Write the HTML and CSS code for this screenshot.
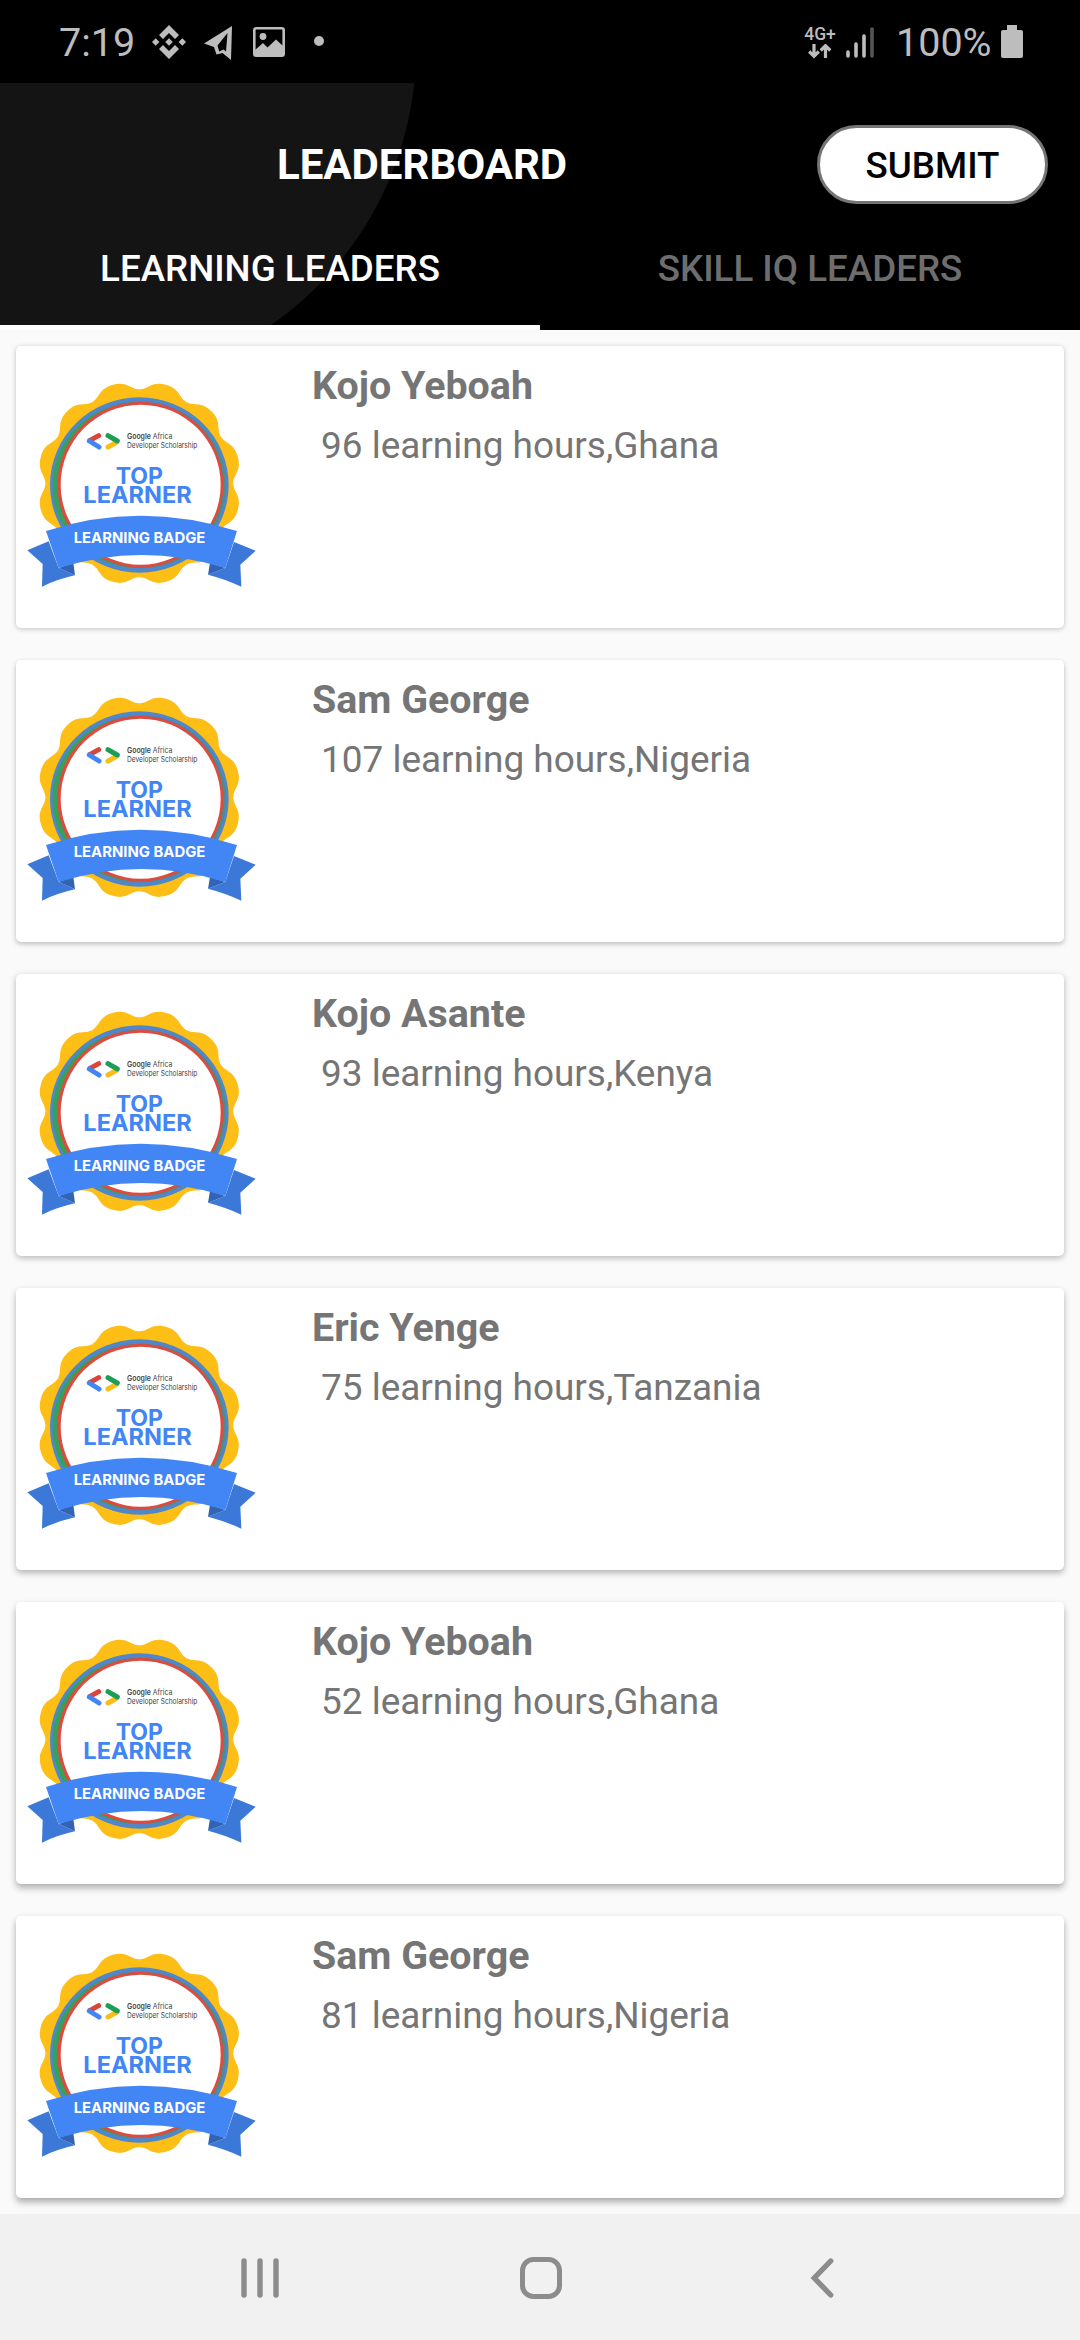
FILE: index.html
```html
<!DOCTYPE html>
<html lang="en"><head><meta charset="utf-8"><title>Leaderboard</title><link rel="stylesheet" href="styles.css"></head>
<body>
<svg class="defs" width="0" height="0" aria-hidden="true">
<defs><path id="lobe" d="M0 2L0-282C28-282 35.7-307.2 79.2-295.6C122.7-284 116.8-258.2 141-244.2Z"/></defs>
<symbol id="badge" viewBox="48 126 696 618">
<g fill="#fdbe15" transform="translate(388 430)">
<circle r="276"/>
<use href="#lobe"/><use href="#lobe" transform="rotate(30)"/><use href="#lobe" transform="rotate(60)"/><use href="#lobe" transform="rotate(90)"/><use href="#lobe" transform="rotate(120)"/><use href="#lobe" transform="rotate(150)"/><use href="#lobe" transform="rotate(180)"/><use href="#lobe" transform="rotate(210)"/><use href="#lobe" transform="rotate(240)"/><use href="#lobe" transform="rotate(270)"/><use href="#lobe" transform="rotate(300)"/><use href="#lobe" transform="rotate(330)"/>
</g>
<ellipse cx="388" cy="435" rx="268" ry="263" fill="#5086cc"/>
<ellipse cx="393" cy="435" rx="255" ry="250" fill="#4b8d8c"/>
<ellipse cx="382" cy="435" rx="254" ry="248" fill="#36a15a"/>
<circle cx="391" cy="434" r="249" fill="#dd4b3e"/>
<circle cx="392" cy="434" r="240" fill="#fff"/>
<g fill="none" stroke-width="15" stroke-linecap="round">
<path stroke="#dc4437" d="M266 287L240 301"/><path stroke="#4285f4" d="M238 303L267 321"/>
<path stroke="#fbbc15" d="M294 321L318 308"/><path stroke="#1e9d57" d="M294 287L322 303"/>
</g>
<g class="badge-small"><text x="351" y="297" textLength="136" lengthAdjust="spacingAndGlyphs"><tspan class="b">Google</tspan> Africa</text>
<text x="351" y="323" textLength="211" lengthAdjust="spacingAndGlyphs">Developer Scholarship</text></g>
<g class="badge-title"><text x="317" y="431" textLength="142" lengthAdjust="spacingAndGlyphs">TOP</text>
<text x="220" y="490" textLength="325" lengthAdjust="spacingAndGlyphs">LEARNER</text></g>
<path fill="#3c78d8" d="M52 631L116 604L146 684L195 706Q140 718 96 740L98 672ZM737 632L672 606L646 684L594 704Q648 718 694 740L691 674Z"/>
<path fill="#3263b4" d="M146 684L190 668L195 706ZM646 684L600 668L594 704Z"/>
<path fill="#4285f4" d="M108 573Q390 481 681 573L646 684Q395 606 146 684Z"/>
<text class="badge-ribbon" x="191" y="608" textLength="395" lengthAdjust="spacingAndGlyphs">LEARNING BADGE</text>
</symbol>
</svg>
<div class="screen">
<header class="status">
<span class="clock">7:19</span>
<svg class="i-diamond" width="34" height="34" viewBox="0 0 34 34" fill="#bdbdbd"><path d="M17 0L27 10L23 14L17 8L11 14L7 10ZM17 34L27 24L23 20L17 26L11 20L7 24ZM3.7 13.3L7.4 17L3.7 20.7L0 17ZM30.3 13.3L34 17L30.3 20.7L26.6 17ZM17 13.2L20.8 17L17 20.8L13.2 17Z"/></svg>
<svg class="i-plane" width="28" height="34" viewBox="0 0 28 34"><path fill="#bdbdbd" fill-rule="evenodd" d="M28 0L27 34L18.500 27L12.500 28.500L10 21L0 17.500ZM23.500 7L13.500 19.500L15.200 25.500L19.500 23.500L22 25.500Z"/></svg>
<svg class="i-photo" width="32" height="30" viewBox="0 0 32 30"><rect x="1.300" y="1.300" width="29.400" height="27.400" rx="2" fill="none" stroke="#bdbdbd" stroke-width="2.600"/><circle cx="10" cy="9.500" r="3.400" fill="#bdbdbd"/><path fill="#bdbdbd" d="M2 23L10 16L14.500 20.500L23 12.500L30 19V28H2Z"/></svg>
<i class="dot"></i>
<span class="net"><b>4G+</b><svg width="24" height="15" viewBox="0 0 24 15" fill="none" stroke="#bdbdbd" stroke-width="3.200"><path d="M6 0V12M1.200 7.500L6 12.300L10.800 7.500M17.500 14V2M12.700 6.500L17.500 1.700L22.300 6.500"/></svg></span>
<svg class="i-signal" width="28" height="31" viewBox="0 0 28 31" stroke-width="3.600" stroke-linecap="round" stroke="#bdbdbd"><path d="M2 25V29M10 17V29M18 9V29"/><path stroke="#555" d="M26 2V29"/></svg>
<span class="pct">100%</span>
<svg class="i-bat" width="22" height="33" viewBox="0 0 22 33" fill="#bdbdbd"><path d="M6 0H16V5H20Q22 5 22 7V31Q22 33 20 33H2Q0 33 0 31V7Q0 5 2 5H6Z"/></svg>
</header>
<section class="appbar">
<div class="bar"><h1>LEADERBOARD</h1><button class="submit">SUBMIT</button></div>
<nav class="tabs"><a class="tab active">LEARNING LEADERS</a><a class="tab">SKILL IQ LEADERS</a></nav>
</section>
<main class="list">
<article class="card s1"><svg class="badge"><use href="#badge"/></svg><div class="info"><h2>Kojo Yeboah</h2><p>96 learning hours,Ghana</p></div></article>
<article class="card s2"><svg class="badge"><use href="#badge"/></svg><div class="info"><h2>Sam George</h2><p>107 learning hours,Nigeria</p></div></article>
<article class="card s3"><svg class="badge"><use href="#badge"/></svg><div class="info"><h2>Kojo Asante</h2><p>93 learning hours,Kenya</p></div></article>
<article class="card s4"><svg class="badge"><use href="#badge"/></svg><div class="info"><h2>Eric Yenge</h2><p>75 learning hours,Tanzania</p></div></article>
<article class="card s5"><svg class="badge"><use href="#badge"/></svg><div class="info"><h2>Kojo Yeboah</h2><p>52 learning hours,Ghana</p></div></article>
<article class="card s6"><svg class="badge"><use href="#badge"/></svg><div class="info"><h2>Sam George</h2><p>81 learning hours,Nigeria</p></div></article>
</main>
<footer class="navbar">
<svg class="n-recent" width="38" height="42" viewBox="0 0 38 42" stroke="#8c8c8c" stroke-width="5.400" stroke-linecap="round"><path d="M3 3V37M19 3V37M35 3V37"/></svg>
<svg class="n-home" width="42" height="42" viewBox="0 0 42 42" fill="none" stroke="#8c8c8c" stroke-width="5"><rect x="2.500" y="2.500" width="37" height="37" rx="11"/></svg>
<svg class="n-back" width="24" height="42" viewBox="0 0 24 42" fill="none" stroke="#8c8c8c" stroke-width="5.400" stroke-linecap="round"><path d="M20.700 3L4.300 20L20.700 37"/></svg>
</footer>
</div>
</body></html>
```
FILE: styles.css
```css
* { box-sizing: border-box; }
body { margin: 0; background: #fafafa; font-family: Roboto, "Liberation Sans", sans-serif; }
h1, h2, p { margin: 0; }
.defs { position: absolute; }
.screen { width: 1080px; height: 2340px; display: flex; flex-direction: column; overflow: hidden; }
.status { height: 83px; background: #000; color: #bdbdbd; display: flex; align-items: flex-start; flex: none; padding-left: 59px; }
.status > * { flex: none; }
.clock { width: 93px; margin-top: 20px; font-size: 39.500px; line-height: 46px; }
.i-diamond { margin-top: 25px; }
.i-plane { margin: 26px 0 0 18px; }
.i-photo { margin: 27px 0 0 21px; }
.dot { width: 10px; height: 10px; border-radius: 50%; background: #bdbdbd; margin: 36px 0 0 29px; }
.net { width: 32px; margin: 27px 0 0 480px; display: flex; flex-direction: column; align-items: center; }
.net b { font-size: 17.500px; line-height: 15px; font-weight: 500; }
.net svg { margin-top: 2px; }
.i-signal { margin: 27px 0 0 10px; }
.pct { width: 105px; margin: 20px 0 0 22px; font-size: 39.500px; line-height: 46px; }
.i-bat { margin-top: 25px; }
.appbar { height: 247px; flex: none; display: flex; flex-direction: column; background: radial-gradient(circle 340px at 79px -35px, #141414 336.500px, #000 337.500px); }
.bar { height: 122px; padding: 42px 32px 0 277px; display: flex; justify-content: space-between; align-items: flex-start; }
h1 { color: #fff; font-size: 42px; line-height: 50px; font-weight: 700; margin-top: 15px; }
.submit { width: 231px; height: 79px; border: 3px solid #757575; border-radius: 40px; background: #fff; color: #000; font: 500 36.750px/44px Roboto, sans-serif; padding: 2px 0 0; }
.tabs { height: 125px; display: flex; }
.tab { flex: 1; color: #6d6d6d; text-align: center; font-size: 36.750px; line-height: 44px; font-weight: 500; padding-top: 42px; border-bottom: 5px solid transparent; }
.tab.active { color: #fff; border-bottom-color: #fff; }
.list { height: 1884px; flex: none; padding: 16px; display: flex; flex-direction: column; gap: 32px; }
.card { height: 282px; flex: none; display: flex; background: #fff; border-radius: 5px; color: #757575; padding: 36px 0 0 10px; box-shadow: 0 1px 5px rgba(0,0,0,.24); }
.s2 { box-shadow: 0 2px 5px rgba(0,0,0,.25); }
.s3 { box-shadow: 0 2px 6px rgba(0,0,0,.28); }
.s4 { box-shadow: 0 3px 6px rgba(0,0,0,.29); }
.s5 { box-shadow: 0 4px 7px rgba(0,0,0,.3); }
.s6 { box-shadow: 0 4px 7px rgba(0,0,0,.33); }
.badge { width: 232px; height: 206px; }
.badge-small { font: 400 23px Inter, sans-serif; fill: #444; }
.badge-small .b { font-weight: 600; }
.badge-title { font: 700 68px Inter, sans-serif; fill: #4285f4; }
.badge-ribbon { font: 700 45px Inter, sans-serif; fill: #fff; }
.info { margin: -19px 0 0 54px; }
h2 { font-size: 39.400px; line-height: 46px; font-weight: 700; }
.info p { font-size: 36.950px; line-height: 44px; margin: 15px 0 0 9px; }
.navbar { height: 126px; flex: none; background: #f1f1f1; display: flex; align-items: flex-start; padding: 44px 0 0 241px; }
.n-home { margin-left: 241px; margin-top: -1px; }
.n-back { margin-left: 248px; }
```
